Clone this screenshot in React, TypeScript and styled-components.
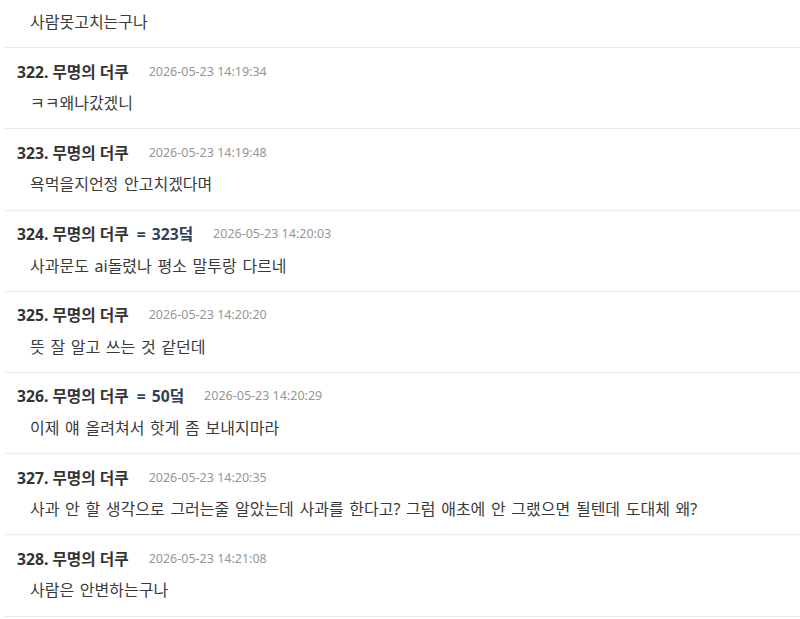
import styled, { createGlobalStyle } from "styled-components";

const GlobalStyle = createGlobalStyle`
  html, body {
    margin: 0;
    padding: 0;
    background: #ffffff;
  }
  body {
    font-family: "Noto Sans", "Noto Sans CJK KR", sans-serif;
    color: #333333;
    overflow: hidden;
  }
`;

type Comment = {
  no?: number;
  reply?: number;
  date?: string;
  text: string;
};

const comments: Comment[] = [
  { text: "사람못고치는구나" },
  { no: 322, date: "2026-05-23 14:19:34", text: "ㅋㅋ왜나갔겠니" },
  { no: 323, date: "2026-05-23 14:19:48", text: "욕먹을지언정 안고치겠다며" },
  {
    no: 324,
    reply: 323,
    date: "2026-05-23 14:20:03",
    text: "사과문도 ai돌렸나 평소 말투랑 다르네",
  },
  { no: 325, date: "2026-05-23 14:20:20", text: "뜻 잘 알고 쓰는 것 같던데" },
  {
    no: 326,
    reply: 50,
    date: "2026-05-23 14:20:29",
    text: "이제 얘 올려쳐서 핫게 좀 보내지마라",
  },
  {
    no: 327,
    date: "2026-05-23 14:20:35",
    text: "사과 안 할 생각으로 그러는줄 알았는데 사과를 한다고? 그럼 애초에 안 그랬으면 될텐데 도대체 왜?",
  },
  { no: 328, date: "2026-05-23 14:21:08", text: "사람은 안변하는구나" },
];

const List = styled.ul`
  list-style: none;
  margin: 0 0 0 4px;
  padding: 0;
`;

const Item = styled.li<{ $cut?: boolean }>`
  display: flex;
  flex-direction: column;
  gap: 12px;
  padding: ${(p) => (p.$cut ? "12px" : "13px")} 0 15.2px 13px;
  border-bottom: 1px solid #ececec;
`;

const Header = styled.div`
  display: flex;
  align-items: center;
  height: 20px;
  white-space: nowrap;
`;

const Name = styled.span`
  font-size: 15.7px;
  font-weight: 700;
  color: #333333;
`;

const Reply = styled.span`
  margin-left: 8px;
  font-size: 15.7px;
  font-weight: 700;
  word-spacing: 2px;
  color: #2f4159;
`;

const DateText = styled.span`
  margin-left: 20px;
  font-size: 12.5px;
  color: #969696;
`;

const Body = styled.div`
  height: 20px;
  line-height: 20px;
  padding-left: 13px;
  font-size: 16px;
  word-spacing: 1.5px;
  color: #3a3a3a;
  white-space: nowrap;
`;

export default function App() {
  return (
    <>
      <GlobalStyle />
      <List>
        {comments.map((c, i) => (
          <Item key={i} $cut={!c.no}>
            {c.no && (
              <Header>
                <Name>{c.no}. 무명의 더쿠</Name>
                {c.reply && <Reply>= {c.reply}덬</Reply>}
                <DateText>{c.date}</DateText>
              </Header>
            )}
            <Body>{c.text}</Body>
          </Item>
        ))}
      </List>
    </>
  );
}
